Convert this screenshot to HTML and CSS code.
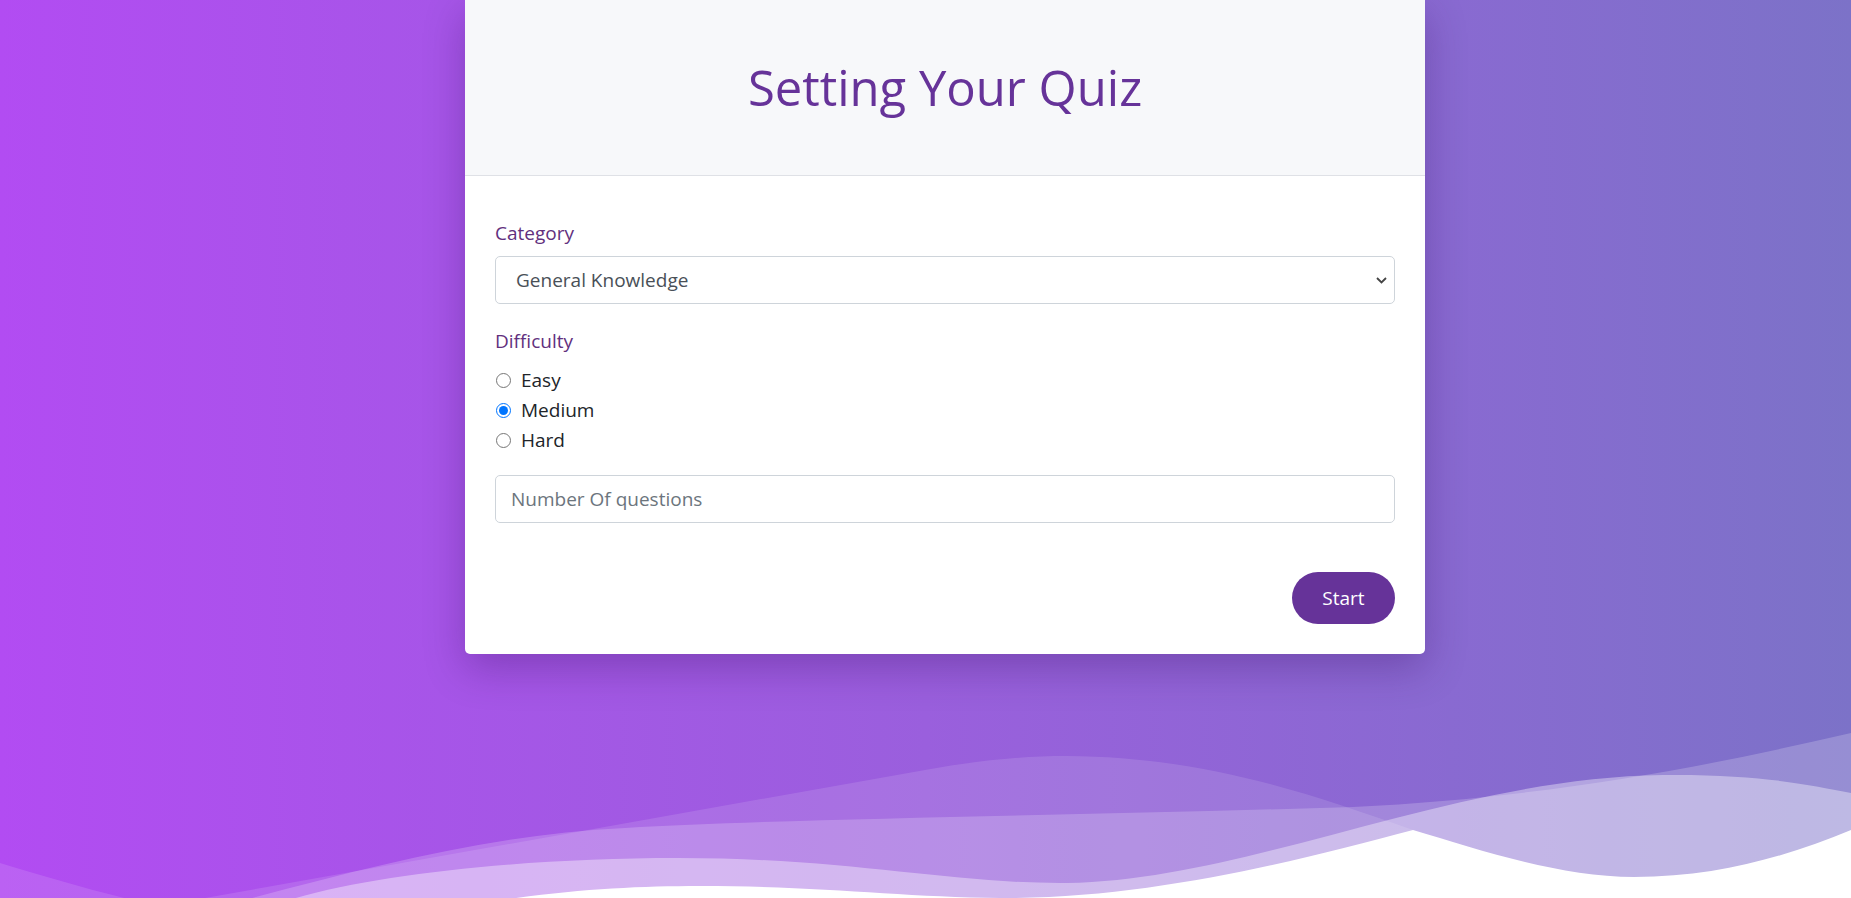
FILE: index.html
```html
<!DOCTYPE html>
<html lang="en">
<head>
<meta charset="utf-8">
<title>Setting Your Quiz</title>
<link rel="stylesheet" href="styles.css">
</head>
<body>
<div class="page">
  <svg class="waves" viewBox="0 698 1851 200" preserveAspectRatio="none" aria-hidden="true">
    <path class="wave-p" d="M0,863 C50,878 110,896 160,906 L925,770 C975,761 1020,756 1067,756 C1200,757 1300,790 1413,830 L1600,912 L0,912 Z"/>
    <path class="wave-q" d="M200,912 C350,872 480,835 625,828 C800,818 1100,815 1353,807 C1550,797 1700,768 1851,733 L1851,912 Z"/>
    <path class="wave-r" d="M250,915 C320,880 500,858 678,858 C850,858 950,884 1067,883 C1250,880 1450,778 1663,775 C1760,774 1810,785 1851,793 L1851,912 L250,912 Z"/>
    <path class="wave-s" d="M470,905 C560,890 630,886 700,886 C820,886 900,897 1000,898 C1150,899 1300,860 1413,830 C1480,850 1560,877 1634,877 C1720,877 1790,855 1851,830 L1851,912 L470,912 Z"/>
  </svg>

  <div class="card">
    <div class="card-header">
      <h1 class="title">Setting Your Quiz</h1>
    </div>
    <form class="card-body">
      <div class="form-group">
        <label class="field-label" for="category">Category</label>
        <select id="category" class="form-select">
          <option>General Knowledge</option>
        </select>
      </div>
      <div class="form-group">
        <div class="field-label">Difficulty</div>
        <label class="radio"><input type="radio" name="difficulty"><span>Easy</span></label>
        <label class="radio"><input type="radio" name="difficulty" checked><span>Medium</span></label>
        <label class="radio"><input type="radio" name="difficulty"><span>Hard</span></label>
      </div>
      <div class="form-group">
        <input type="text" class="form-input" placeholder="Number Of questions">
      </div>
      <div class="actions">
        <button type="button" class="btn-start">Start</button>
      </div>
    </form>
  </div>
</div>
</body>
</html>
```

FILE: styles.css
```css
* { box-sizing: border-box; }

html, body {
  margin: 0;
  padding: 0;
}

body {
  font-family: "Open Sans", "Noto Sans", "Liberation Sans", sans-serif;
  color: #212529;
  background: #ffffff;
}

.page {
  position: relative;
  min-height: 898px;
  overflow: hidden;
  background: linear-gradient(to right, #b24cf2 0%, #9a5fdd 50%, #7c72c8 100%);
  display: flex;
  justify-content: center;
  align-items: flex-start;
  padding-left: 39px;
}

.waves {
  position: absolute;
  left: 0;
  bottom: 0;
  width: 100%;
  height: 200px;
  display: block;
}

.wave-p { fill: rgba(255, 255, 255, 0.12); }
.wave-q { fill: rgba(255, 255, 255, 0.2); }
.wave-r { fill: rgba(255, 255, 255, 0.38); }
.wave-s { fill: #ffffff; }

.card {
  position: relative;
  width: 960px;
  background: #ffffff;
  border-radius: 0 0 5px 5px;
  box-shadow: 0 14px 40px rgba(50, 10, 90, 0.3);
  overflow: hidden;
}

.card-header {
  background: #f7f8fa;
  border-bottom: 1px solid #dfe1e6;
  height: 176px;
  padding-top: 57px;
  text-align: center;
}

.title {
  margin: 0;
  font-size: 49px;
  line-height: 60px;
  font-weight: 500;
  color: #663399;
}

.card-body {
  padding: 40px 30px 30px;
  display: flex;
  flex-direction: column;
}

.form-group {
  margin-bottom: 20px;
  display: flex;
  flex-direction: column;
}

.field-label {
  font-size: 19px;
  line-height: 30px;
  padding-top: 2px;
  color: #62307e;
  margin-bottom: 8px;
}

.form-select,
.form-input {
  width: 100%;
  height: 48px;
  border: 1px solid #ced4da;
  border-radius: 5px;
  background-color: #ffffff;
  font-family: inherit;
  font-size: 19px;
  color: #495057;
  outline: none;
}

.form-select {
  appearance: none;
  -webkit-appearance: none;
  padding: 0 40px 0 20px;
  background-image: url("data:image/svg+xml,%3Csvg xmlns='http://www.w3.org/2000/svg' width='11' height='7' viewBox='0 0 11 7'%3E%3Cpath d='M1 1l4.5 4.5L10 1' fill='none' stroke='%23444' stroke-width='1.8'/%3E%3C/svg%3E");
  background-repeat: no-repeat;
  background-position: right 7px center;
}

.form-input {
  padding: 0 15px;
}

.form-input::placeholder {
  color: #6c757d;
  opacity: 1;
}

.radio {
  display: flex;
  align-items: center;
  height: 30px;
  font-size: 19px;
  color: #212529;
}

.radio:first-of-type {
  margin-top: 1px;
}

.radio input {
  width: 15px;
  height: 15px;
  margin: 0 10px 0 1px;
}

.actions {
  display: flex;
  justify-content: flex-end;
  padding-top: 29px;
}

.btn-start {
  width: 103px;
  height: 52px;
  border: none;
  border-radius: 26px;
  background: #663399;
  color: #ffffff;
  font-family: inherit;
  font-size: 19px;
  cursor: pointer;
}
```
